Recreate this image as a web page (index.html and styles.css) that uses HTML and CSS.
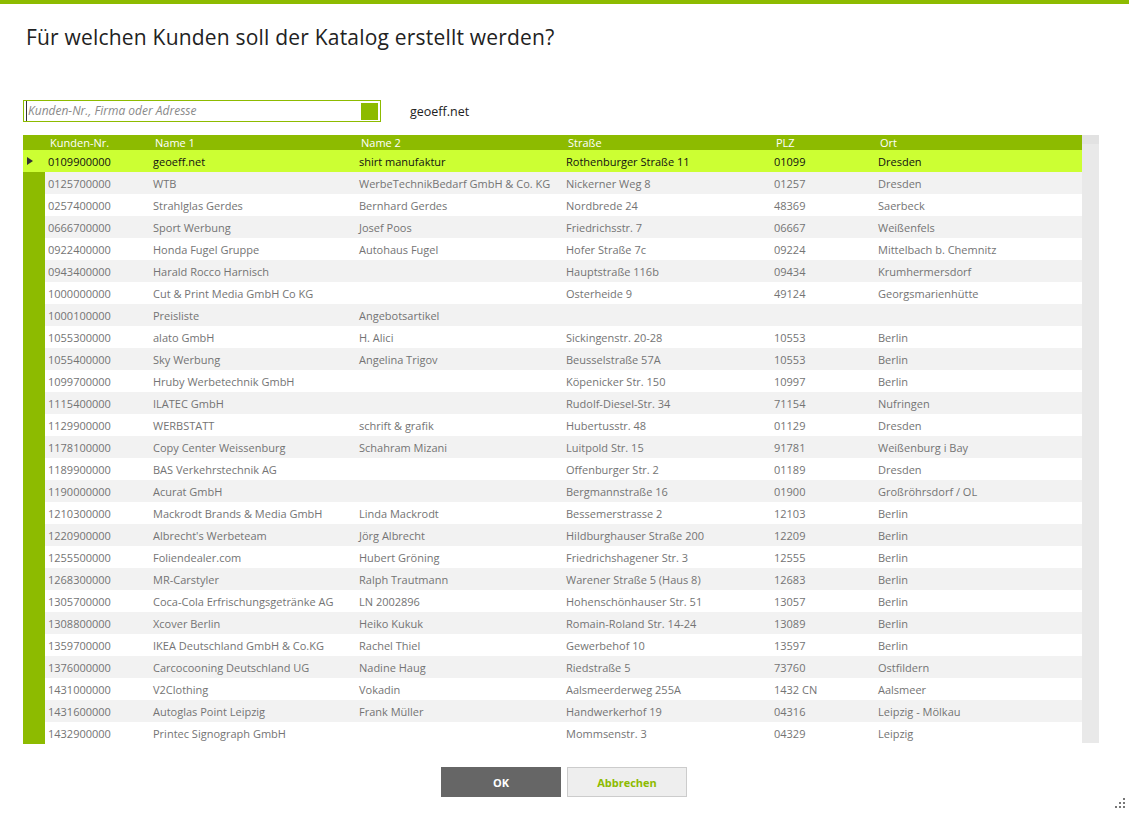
FILE: index.html
```html
<!DOCTYPE html>
<html lang="de">
<head>
<meta charset="utf-8">
<title>Katalog</title>
<link rel="stylesheet" href="styles.css">
</head>
<body>
<div class="topbar"></div>
<h1 class="title">Für welchen Kunden soll der Katalog erstellt werden?</h1>
<div class="searchrow">
  <div class="search">
    <input class="search-input" type="text" placeholder="Kunden-Nr., Firma oder Adresse">
    <span class="search-btn"></span>
  </div>
  <span class="selected">geoeff.net</span>
</div>
<div class="grid">
  <div class="grid-main">
    <table class="tbl">
      <colgroup>
        <col class="c-mark"><col class="c-nr"><col class="c-n1"><col class="c-n2"><col class="c-str"><col class="c-plz"><col class="c-ort">
      </colgroup>
      <thead>
        <tr><th class="mark"></th><th>Kunden-Nr.</th><th>Name 1</th><th>Name 2</th><th>Straße</th><th>PLZ</th><th>Ort</th></tr>
      </thead>
      <tbody>
        <tr class="sel"><td class="mark"><span class="arrow"></span></td><td>0109900000</td><td>geoeff.net</td><td>shirt manufaktur</td><td>Rothenburger Straße 11</td><td>01099</td><td>Dresden</td></tr>
        <tr><td class="mark"></td><td>0125700000</td><td>WTB</td><td>WerbeTechnikBedarf GmbH &amp; Co. KG</td><td>Nickerner Weg 8</td><td>01257</td><td>Dresden</td></tr>
        <tr><td class="mark"></td><td>0257400000</td><td>Strahlglas Gerdes</td><td>Bernhard Gerdes</td><td>Nordbrede 24</td><td>48369</td><td>Saerbeck</td></tr>
        <tr><td class="mark"></td><td>0666700000</td><td>Sport Werbung</td><td>Josef Poos</td><td>Friedrichsstr. 7</td><td>06667</td><td>Weißenfels</td></tr>
        <tr><td class="mark"></td><td>0922400000</td><td>Honda Fugel Gruppe</td><td>Autohaus Fugel</td><td>Hofer Straße 7c</td><td>09224</td><td>Mittelbach b. Chemnitz</td></tr>
        <tr><td class="mark"></td><td>0943400000</td><td>Harald Rocco Harnisch</td><td></td><td>Hauptstraße 116b</td><td>09434</td><td>Krumhermersdorf</td></tr>
        <tr><td class="mark"></td><td>1000000000</td><td>Cut &amp; Print Media GmbH Co KG</td><td></td><td>Osterheide 9</td><td>49124</td><td>Georgsmarienhütte</td></tr>
        <tr><td class="mark"></td><td>1000100000</td><td>Preisliste</td><td>Angebotsartikel</td><td></td><td></td><td></td></tr>
        <tr><td class="mark"></td><td>1055300000</td><td>alato GmbH</td><td>H. Alici</td><td>Sickingenstr. 20-28</td><td>10553</td><td>Berlin</td></tr>
        <tr><td class="mark"></td><td>1055400000</td><td>Sky Werbung</td><td>Angelina Trigov</td><td>Beusselstraße 57A</td><td>10553</td><td>Berlin</td></tr>
        <tr><td class="mark"></td><td>1099700000</td><td>Hruby Werbetechnik GmbH</td><td></td><td>Köpenicker Str. 150</td><td>10997</td><td>Berlin</td></tr>
        <tr><td class="mark"></td><td>1115400000</td><td>ILATEC GmbH</td><td></td><td>Rudolf-Diesel-Str. 34</td><td>71154</td><td>Nufringen</td></tr>
        <tr><td class="mark"></td><td>1129900000</td><td>WERBSTATT</td><td>schrift &amp; grafik</td><td>Hubertusstr. 48</td><td>01129</td><td>Dresden</td></tr>
        <tr><td class="mark"></td><td>1178100000</td><td>Copy Center Weissenburg</td><td>Schahram Mizani</td><td>Luitpold Str. 15</td><td>91781</td><td>Weißenburg i Bay</td></tr>
        <tr><td class="mark"></td><td>1189900000</td><td>BAS Verkehrstechnik AG</td><td></td><td>Offenburger Str. 2</td><td>01189</td><td>Dresden</td></tr>
        <tr><td class="mark"></td><td>1190000000</td><td>Acurat GmbH</td><td></td><td>Bergmannstraße 16</td><td>01900</td><td>Großröhrsdorf / OL</td></tr>
        <tr><td class="mark"></td><td>1210300000</td><td>Mackrodt Brands &amp; Media GmbH</td><td>Linda Mackrodt</td><td>Bessemerstrasse 2</td><td>12103</td><td>Berlin</td></tr>
        <tr><td class="mark"></td><td>1220900000</td><td>Albrecht's Werbeteam</td><td>Jörg Albrecht</td><td>Hildburghauser Straße 200</td><td>12209</td><td>Berlin</td></tr>
        <tr><td class="mark"></td><td>1255500000</td><td>Foliendealer.com</td><td>Hubert Gröning</td><td>Friedrichshagener Str. 3</td><td>12555</td><td>Berlin</td></tr>
        <tr><td class="mark"></td><td>1268300000</td><td>MR-Carstyler</td><td>Ralph Trautmann</td><td>Warener Straße 5 (Haus 8)</td><td>12683</td><td>Berlin</td></tr>
        <tr><td class="mark"></td><td>1305700000</td><td>Coca-Cola Erfrischungsgetränke AG</td><td>LN 2002896</td><td>Hohenschönhauser Str. 51</td><td>13057</td><td>Berlin</td></tr>
        <tr><td class="mark"></td><td>1308800000</td><td>Xcover Berlin</td><td>Heiko Kukuk</td><td>Romain-Roland Str. 14-24</td><td>13089</td><td>Berlin</td></tr>
        <tr><td class="mark"></td><td>1359700000</td><td>IKEA Deutschland GmbH &amp; Co.KG</td><td>Rachel Thiel</td><td>Gewerbehof 10</td><td>13597</td><td>Berlin</td></tr>
        <tr><td class="mark"></td><td>1376000000</td><td>Carcocooning Deutschland UG</td><td>Nadine Haug</td><td>Riedstraße 5</td><td>73760</td><td>Ostfildern</td></tr>
        <tr><td class="mark"></td><td>1431000000</td><td>V2Clothing</td><td>Vokadin</td><td>Aalsmeerderweg 255A</td><td>1432 CN</td><td>Aalsmeer</td></tr>
        <tr><td class="mark"></td><td>1431600000</td><td>Autoglas Point Leipzig</td><td>Frank Müller</td><td>Handwerkerhof 19</td><td>04316</td><td>Leipzig - Mölkau</td></tr>
        <tr><td class="mark"></td><td>1432900000</td><td>Printec Signograph GmbH</td><td></td><td>Mommsenstr. 3</td><td>04329</td><td>Leipzig</td></tr>
      </tbody>
    </table>
  </div>
  <div class="scrollbar"><div class="scroll-top"></div></div>
</div>
<div class="buttons">
  <button class="btn btn-ok">OK</button>
  <button class="btn btn-cancel">Abbrechen</button>
</div>
<div class="grip">
  <span></span><span></span><span></span><span></span><span></span><span></span>
</div>
</body>
</html>
```
FILE: styles.css
```css
html, body {
  margin: 0;
  padding: 0;
  background: #fff;
}
body {
  width: 1129px;
  height: 813px;
  position: relative;
  overflow: hidden;
  font-family: "Open Sans", "Noto Sans", "Liberation Sans", sans-serif;
  color: #333;
}
.topbar {
  height: 4px;
  background: #8dbb00;
}
.title {
  margin: 0;
  padding: 19px 0 0 26px;
  height: 75px;
  box-sizing: border-box;
  font-weight: 400;
  font-size: 21px;
  line-height: 28px;
  color: #222;
  letter-spacing: 0.2px;
}
.searchrow {
  display: flex;
  align-items: center;
  padding-left: 23px;
  height: 22px;
  margin-top: 21px;
}
.search {
  width: 358px;
  height: 22px;
  box-sizing: border-box;
  border: 1px solid #8dbb00;
  display: flex;
  align-items: center;
  padding: 0 2px 0 2px;
}
.search-input {
  flex: 1;
  border: none;
  outline: none;
  height: 18px;
  line-height: 16px;
  padding: 0 0 2px 1px;
  font-family: inherit;
  font-size: 12px;
  font-style: italic;
  color: #555;
  background: transparent;
  border-left: 1px solid #333;
}
.search-input::placeholder {
  color: #8a8a8a;
  font-style: italic;
}
.search-btn {
  width: 17px;
  height: 17px;
  background: #8dbb00;
}
.selected {
  margin-left: 29px;
  font-size: 12.5px;
  color: #222;
}
.grid {
  display: flex;
  margin: 13px 0 0 23px;
  width: 1076px;
  height: 609px;
}
.grid-main {
  width: 1059px;
}
.tbl {
  width: 1059px;
  border-collapse: collapse;
  table-layout: fixed;
  font-size: 11px;
}
.c-mark { width: 22px; }
.c-nr { width: 105px; }
.c-n1 { width: 206px; }
.c-n2 { width: 207px; }
.c-str { width: 208px; }
.c-plz { width: 104px; }
.c-ort { width: 207px; }
.tbl th {
  background: #8dbb00;
  color: #fff;
  font-weight: 400;
  text-align: left;
  height: 15px;
  padding: 0 0 0 5px;
  line-height: 15px;
  white-space: nowrap;
  overflow: hidden;
}
.tbl td {
  height: 22px;
  box-sizing: border-box;
  padding: 1px 0 0 3px;
  line-height: 21px;
  color: #747474;
  white-space: nowrap;
  overflow: hidden;
}
.tbl tbody tr:nth-child(even) td {
  background: #f2f2f2;
}
.tbl td.mark,
.tbl tbody tr:nth-child(even) td.mark {
  background: #8dbb00;
  padding: 0;
  position: relative;
}
.tbl tr.sel td {
  background: #ccff33;
  color: #111;
}
.tbl tr.sel td.mark {
  background: #ccff33;
}
.arrow {
  position: absolute;
  left: 4px;
  top: 7px;
  width: 0;
  height: 0;
  border-top: 4px solid transparent;
  border-bottom: 4px solid transparent;
  border-left: 6px solid #333;
}
.scrollbar {
  width: 17px;
  height: 608px;
  background: #e9e9e9;
}
.scroll-top {
  height: 9px;
  background: #e2e2e2;
}
.buttons {
  display: flex;
  justify-content: center;
  gap: 6px;
  margin-top: 23px;
  padding-right: 1px;
}
.btn {
  width: 120px;
  height: 30px;
  font-family: inherit;
  font-size: 11px;
  font-weight: 700;
  border: 1px solid transparent;
  cursor: pointer;
  padding: 0;
}
.btn-ok {
  background: #666;
  color: #fff;
  border-color: #666;
}
.btn-cancel {
  background: #eeeeee;
  color: #8dbb00;
  border-color: #cccccc;
}
.grip {
  position: absolute;
  right: 4px;
  bottom: 5px;
  width: 10px;
  height: 10px;
}
.grip span {
  position: absolute;
  width: 2px;
  height: 2px;
  background: #777;
}
.grip span:nth-child(1) { right: 0; top: 0; }
.grip span:nth-child(2) { right: 0; top: 4px; }
.grip span:nth-child(3) { right: 4px; top: 4px; }
.grip span:nth-child(4) { right: 0; top: 8px; }
.grip span:nth-child(5) { right: 4px; top: 8px; }
.grip span:nth-child(6) { right: 8px; top: 8px; }
```
